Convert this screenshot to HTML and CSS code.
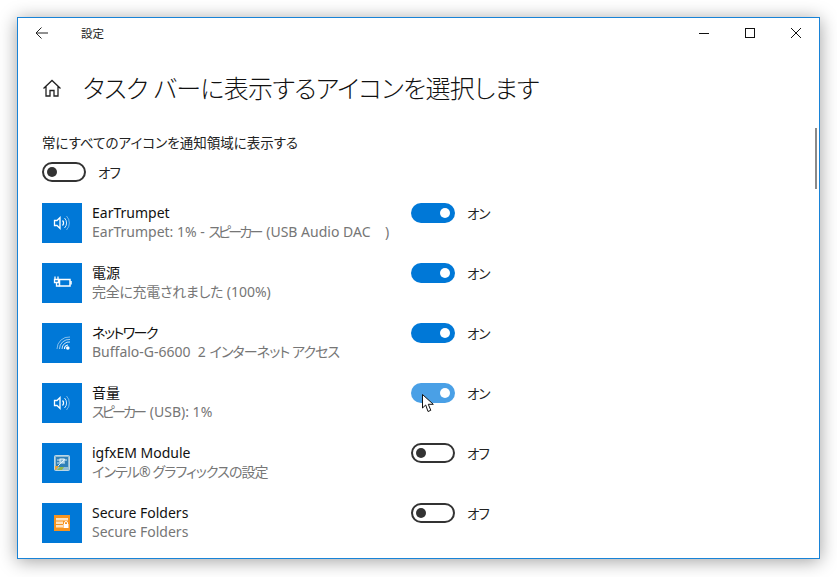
FILE: index.html
```html
<!DOCTYPE html>
<html lang="ja">
<head>
<meta charset="utf-8">
<title>設定</title>
<link rel="stylesheet" href="styles.css">
</head>
<body>
<div class="window">
  <header class="titlebar">
    <svg class="back" width="14" height="14" viewBox="0 0 14 14"><path d="M13 7H1.500M6.500 1.500L1 7l5.500 5.500" fill="none" stroke="#222" stroke-width="1"/></svg>
    <span class="title">設定</span>
    <div class="controls">
      <svg width="10" height="10" viewBox="0 0 10 10"><path d="M0 5.500H10" stroke="#111" stroke-width="1"/></svg>
      <svg width="10" height="10" viewBox="0 0 10 10"><rect x=".5" y=".5" width="9" height="9" fill="none" stroke="#111"/></svg>
      <svg width="10" height="10" viewBox="0 0 10 10"><path d="M0 0L10 10M10 0L0 10" stroke="#111" stroke-width="1"/></svg>
    </div>
  </header>
  <main class="content">
    <div class="heading">
      <svg class="home" width="20" height="20" viewBox="0 0 20 20"><path d="M1.500 10.500L10 2.500l8.500 8M4 8.500V18h4v-5.500h4V18h4V8.500" fill="none" stroke="#222" stroke-width="1.300"/></svg>
      <h1>タスク バーに表示するアイコンを選択します</h1>
    </div>
    <p class="all-label">常にすべてのアイコンを通知領域に表示する</p>
    <div class="toggle-row master"><span class="toggle off"></span><span class="state">オフ</span></div>
    <ul class="list">
      <li class="item">
        <span class="tile"><svg width="20" height="20" viewBox="0 0 20 20" fill="none" stroke="#fff"><path d="M2.500 7.500h2.500l3-3v11l-3-3H2.500z" stroke-width="1.300"/><path d="M10.500 7.500a3.500 3.500 0 0 1 0 5" stroke-width="1.300"/><path d="M12.500 5a7 7 0 0 1 0 10" opacity=".85"/><path d="M14.500 3a10 10 0 0 1 0 14" opacity=".45"/></svg></span>
        <div class="text"><div class="name">EarTrumpet</div><div class="sub">EarTrumpet: 1% - <span class="k-lg">スピーカー</span> (USB Audio DAC &nbsp;&nbsp;&nbsp;)</div></div>
        <div class="toggle-row"><span class="toggle on"></span><span class="state">オン</span></div>
      </li>
      <li class="item">
        <span class="tile"><svg width="20" height="20" viewBox="0 0 20 20" fill="none" stroke="#fff"><rect x="7.500" y="6.500" width="10.500" height="6.500" stroke-width="1.500"/><path d="M19 8v3.500" stroke-width="1.500"/><path d="M2.500 6.500h4v3h-4zM4.500 9.500V13h3M3 3.500v3M6 3.500v3" stroke-width="1.300"/></svg></span>
        <div class="text"><div class="name">電源</div><div class="sub"><span class="k-sm">完全に充電されました</span> (100%)</div></div>
        <div class="toggle-row"><span class="toggle on"></span><span class="state">オン</span></div>
      </li>
      <li class="item">
        <span class="tile"><svg width="20" height="20" viewBox="0 0 20 20" fill="none" stroke="#fff"><path d="M5 16a12 12 0 0 1 13-12" opacity=".5"/><path d="M7.500 16a9.500 9.500 0 0 1 10.500-9.500" opacity=".65"/><path d="M10 16a7 7 0 0 1 8-7" opacity=".8"/><path d="M12.500 16a4 4 0 0 1 3.500-4" stroke-width="1.200"/><circle cx="15.800" cy="15" r="1.800" fill="#fff" stroke="none"/></svg></span>
        <div class="text"><div class="name k-name">ネットワーク</div><div class="sub">Buffalo-G-6600 &nbsp;2 <span class="k">インターネット アクセス</span></div></div>
        <div class="toggle-row"><span class="toggle on"></span><span class="state">オン</span></div>
      </li>
      <li class="item">
        <span class="tile"><svg width="20" height="20" viewBox="0 0 20 20" fill="none" stroke="#fff"><path d="M2.500 7.500h2.500l3-3v11l-3-3H2.500z" stroke-width="1.300"/><path d="M10.500 7.500a3.500 3.500 0 0 1 0 5" stroke-width="1.300"/><path d="M12.500 5a7 7 0 0 1 0 10" opacity=".85"/><path d="M14.500 3a10 10 0 0 1 0 14" opacity=".45"/></svg></span>
        <div class="text"><div class="name">音量</div><div class="sub"><span class="k-lg">スピーカー</span> (USB): 1%</div></div>
        <div class="toggle-row"><span class="toggle on hover"></span><span class="state">オン</span>
          <svg class="cursor" width="13" height="19" viewBox="0 0 13 19"><path d="M.500.500V14l3.200-3 2.300 6.500 2.800-1.200-2.500-6h5z" fill="#fff" stroke="#111" stroke-width="1"/></svg>
        </div>
      </li>
      <li class="item">
        <span class="tile"><svg width="16" height="16" viewBox="0 0 16 16"><rect x=".5" y=".5" width="15" height="15" rx="1" fill="#8fbdd6" stroke="#bcd6e4"/><rect x="2" y="2" width="12" height="10" fill="#2f80b8"/><path d="M3 5h10M3 8h8M4 11l7-7" stroke="#d8edf7" stroke-width="1"/><rect x="6" y="4" width="4" height="3" fill="none" stroke="#eaf6fb"/><path d="M1 15V11l4 0-3 4z" fill="#e5a33a"/><path d="M3 15l3-3h4l-2 3z" fill="#8fb84e"/></svg></span>
        <div class="text"><div class="name">igfxEM Module</div><div class="sub"><span class="k">インテル® グラフィックスの設定</span></div></div>
        <div class="toggle-row"><span class="toggle off"></span><span class="state">オフ</span></div>
      </li>
      <li class="item">
        <span class="tile"><svg width="16" height="16" viewBox="0 0 16 16"><rect width="16" height="16" fill="#f7941e"/><rect x="2" y="3" width="12" height="2.500" fill="#ffe3bd"/><rect x="2" y="6.500" width="7" height="2.500" fill="#ffe3bd"/><rect x="2" y="10" width="7" height="2.500" fill="#ffe3bd"/><rect x="9.500" y="9" width="5" height="4" fill="#fff"/><path d="M10.500 9V8a1.500 1.500 0 0 1 3 0v1" fill="none" stroke="#fff"/></svg></span>
        <div class="text"><div class="name">Secure Folders</div><div class="sub">Secure Folders</div></div>
        <div class="toggle-row"><span class="toggle off"></span><span class="state">オフ</span></div>
      </li>
    </ul>
    <div class="scrollbar"></div>
  </main>
</div>
</body>
</html>
```
FILE: styles.css
```css
* { box-sizing: border-box; }
html, body { margin: 0; height: 100%; }
body {
  width: 837px;
  height: 577px;
  padding: 17px 17px 18px 17px;
  background: #fff;
  overflow: hidden;
  font-family: "Noto Sans", "Noto Sans CJK JP", sans-serif;
  font-feature-settings: "palt";
  color: #111;
}
.window {
  width: 803px;
  height: 542px;
  background: #fff;
  border: 1px solid #1883d7;
  box-shadow: 0 2px 17px rgba(0,0,0,.38);
  display: flex;
  flex-direction: column;
  overflow: hidden;
}
.titlebar {
  height: 30px;
  flex: none;
  display: flex;
  align-items: center;
  padding-left: 17px;
}
.back { flex: none; }
.title { margin-left: 32px; font-size: 11.500px; color: #222; }
.controls { margin-left: auto; display: flex; align-items: center; gap: 36px; padding-right: 18px; }
.content { position: relative; flex: 1; padding: 0 24px; min-height: 0; }
.heading { display: flex; align-items: center; height: 30px; margin-top: 25px; }
.home { margin-right: 21px; flex: none; }
h1 { margin: 0; font-size: 25px; font-weight: 300; color: #111; line-height: 30px; letter-spacing: -.7px; white-space: nowrap; }
.all-label { margin: 30px 0 0; font-size: 13.500px; line-height: 20px; color: #222; }
.toggle-row { display: flex; align-items: center; gap: 12px; font-size: 13.500px; color: #222; position: relative; }
.state { letter-spacing: -1px; }
.master { margin-top: 9px; height: 20px; }
.toggle { display: block; width: 44px; height: 20px; border-radius: 10px; position: relative; flex: none; }
.toggle::after { content: ""; position: absolute; top: 5px; width: 10px; height: 10px; border-radius: 50%; }
.toggle.off { border: 2px solid #333; }
.toggle.off::after { left: 3px; top: 3px; background: #333; }
.toggle.on { background: #0078d7; }
.toggle.on::after { right: 5px; background: #fff; }
.toggle.hover { background: #4aa0e6; }
.cursor { position: absolute; left: 11px; top: 11px; }
.list { list-style: none; margin: 21px 0 0; padding: 0; }
.item { display: flex; align-items: flex-start; height: 60px; }
.tile { width: 40px; height: 40px; background: #0078d7; display: flex; align-items: center; justify-content: center; flex: none; }
.text { width: 319px; margin-left: 10px; flex: none; white-space: nowrap; }
.name { font-size: 14px; line-height: 20px; color: #111; }
.k-name { letter-spacing: -1.500px; }
.sub { font-size: 14px; line-height: 19px; margin-top: -1px; color: #767676; }
.k { letter-spacing: -.9px; }
.k-sm { letter-spacing: -.3px; }
.k-lg { letter-spacing: -2.800px; padding-right: 2px; }
.item .toggle-row { height: 20px; }
.scrollbar { position: absolute; right: 2px; top: 80px; width: 2px; height: 61px; background: #8a8a8a; }
```
